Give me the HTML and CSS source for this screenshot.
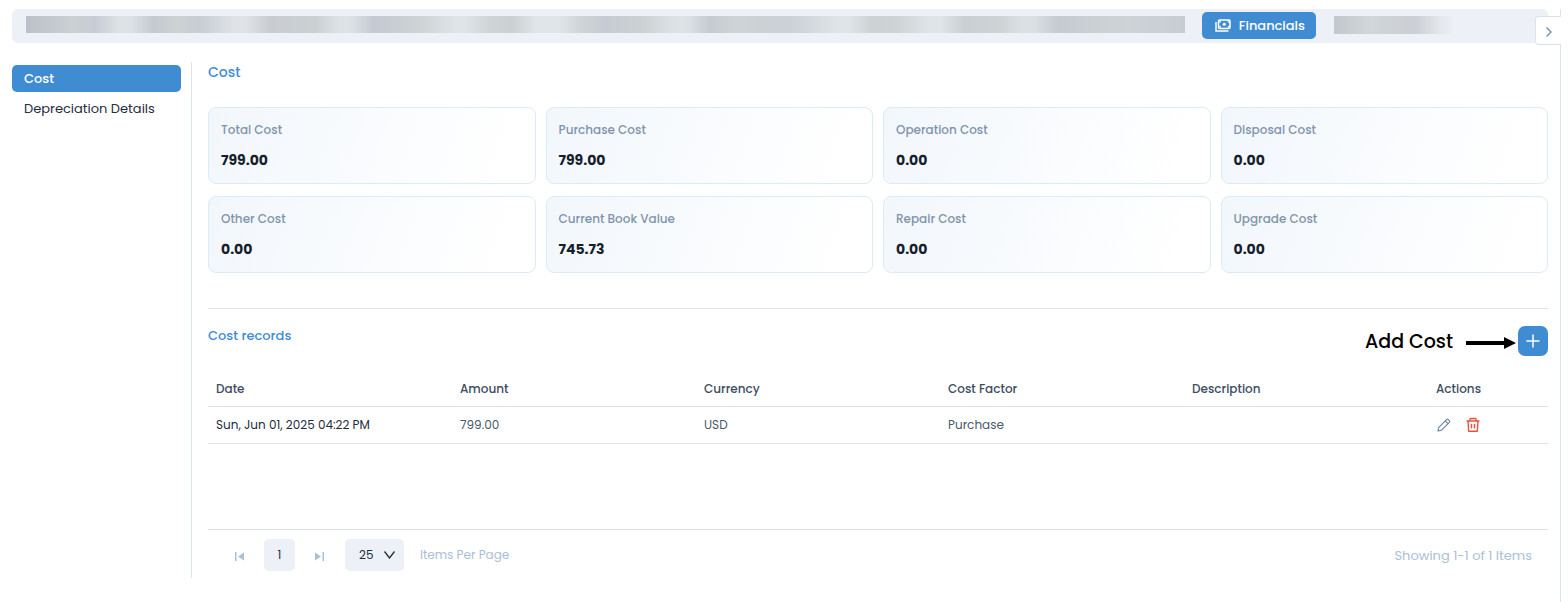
FILE: index.html
```
<!DOCTYPE html>
<html lang="en">
<head>
  <meta charset="UTF-8">
  <meta name="viewport" content="width=device-width, initial-scale=1.0">
  <title>Financials</title>
  <link rel="stylesheet" href="styles.css">
</head>
<body>
<div class="panel">
  <header class="topbar">
    <div class="masked masked-tabs"></div>
    <button class="tab-button" type="button">
      <svg width="16" height="13" viewBox="0 0 16 13" fill="none" stroke="currentColor" stroke-width="1.5">
        <path d="M1 3v9h12.500"/>
        <rect x="3.500" y="1" width="11.500" height="8.500" rx="1"/>
        <circle cx="9.250" cy="5.250" r="1.600" fill="currentColor" stroke="none"/>
        <path d="M3.500 3.200h1.800V1M15 3.200h-1.800V1M3.500 7.300h1.800v2.200M15 7.300h-1.800v2.200" stroke-width="1"/>
      </svg>
      Financials
    </button>
    <div class="masked masked-tab"></div>
  </header>
  <button class="panel-toggle" type="button" aria-label="Expand panel">
    <svg width="8" height="12" viewBox="0 0 8 12" fill="none" stroke="currentColor" stroke-width="1.500">
      <path d="M1.500 1.500L6 6l-4.500 4.500"/>
    </svg>
  </button>

  <div class="layout">
    <nav class="sidebar">
      <a class="side-link active" href="#cost">Cost</a>
      <a class="side-link" href="#depreciation">Depreciation Details</a>
    </nav>

    <main class="content">
      <h2 class="title">Cost</h2>
      <div class="cards">
        <div class="card"><div class="label">Total Cost</div><div class="value">799.00</div></div>
        <div class="card"><div class="label">Purchase Cost</div><div class="value">799.00</div></div>
        <div class="card"><div class="label">Operation Cost</div><div class="value">0.00</div></div>
        <div class="card"><div class="label">Disposal Cost</div><div class="value">0.00</div></div>
        <div class="card"><div class="label">Other Cost</div><div class="value">0.00</div></div>
        <div class="card"><div class="label">Current Book Value</div><div class="value">745.73</div></div>
        <div class="card"><div class="label">Repair Cost</div><div class="value">0.00</div></div>
        <div class="card"><div class="label">Upgrade Cost</div><div class="value">0.00</div></div>
      </div>

      <section class="records">
        <div class="records-head">
          <h3 class="records-title">Cost records</h3>
          <div class="add-cost">
            <span class="add-label" id="add-label">Add Cost</span>
            <svg class="arrow" width="50" height="12" viewBox="0 0 50 12">
              <path d="M0 4h38V0l12 6-12 6V8H0z" fill="#000"/>
            </svg>
            <button class="add-button" type="button" aria-labelledby="add-label">
              <svg width="14" height="14" viewBox="0 0 14 14" fill="none" stroke="currentColor" stroke-width="1.500" stroke-linecap="round">
                <path d="M7 1v12M1 7h12"/>
              </svg>
            </button>
          </div>
        </div>

        <table class="table">
          <thead>
            <tr>
              <th>Date</th>
              <th>Amount</th>
              <th>Currency</th>
              <th>Cost Factor</th>
              <th>Description</th>
              <th class="col-actions">Actions</th>
            </tr>
          </thead>
          <tbody>
            <tr>
              <td class="date">Sun, Jun 01, 2025 04:22 PM</td>
              <td>799.00</td>
              <td>USD</td>
              <td>Purchase</td>
              <td></td>
              <td>
                <div class="actions">
                  <button class="icon-button" type="button" aria-label="Edit">
                    <svg width="16" height="16" viewBox="0 0 16 16" fill="none" stroke="currentColor" stroke-width="1.200" stroke-linejoin="round">
                      <path d="M2 14l.800-3.600 7.800-7.800a1.300 1.300 0 0 1 1.800 0l1 1a1.300 1.300 0 0 1 0 1.800l-7.800 7.800L2 14z"/>
                      <path d="M9.300 4l2.700 2.700"/>
                    </svg>
                  </button>
                  <button class="icon-button danger" type="button" aria-label="Delete">
                    <svg width="16" height="16" viewBox="0 0 16 16" fill="none" stroke="currentColor" stroke-width="1.400" stroke-linejoin="round">
                      <path d="M1.500 4h13M4.500 4l.800-2.500h5.400l.800 2.500M3 4l.700 10.300h8.600L13 4M6.500 7v4.500M9.500 7v4.500"/>
                    </svg>
                  </button>
                </div>
              </td>
            </tr>
          </tbody>
        </table>
      </section>

      <footer class="pager">
        <button class="icon-button page-nav" type="button" aria-label="First page">
          <svg width="9" height="9" viewBox="0 0 9 9" fill="currentColor"><path d="M0 0h1.500v9H0zM9 .500v8L3 4.500z"/></svg>
        </button>
        <button class="page-number" type="button">1</button>
        <button class="icon-button page-nav" type="button" aria-label="Last page">
          <svg width="9" height="9" viewBox="0 0 9 9" fill="currentColor"><path d="M7.500 0H9v9H7.500zM0 .500v8l6-4z"/></svg>
        </button>
        <div class="page-size">
          <select id="page-size">
            <option>25</option>
            <option>50</option>
            <option>100</option>
          </select>
          <svg class="chevron" width="11" height="8" viewBox="0 0 11 8" fill="none" stroke="currentColor" stroke-width="1.300">
            <path d="M.500 .500l5 6.500 5-6.500"/>
          </svg>
        </div>
        <label class="page-size-label" for="page-size">Items Per Page</label>
        <span class="showing">Showing 1-1 of 1 Items</span>
      </footer>
    </main>
  </div>
</div>
</body>
</html>
```
FILE: styles.css
```
* {
  box-sizing: border-box;
}
body {
  margin: 0;
  padding-top: 9px;
  background: #fff;
  color: #1f2d3d;
  font-family: Poppins, Inter, "Open Sans", sans-serif;
  font-size: 13px;
  line-height: 20px;
}
button, select {
  font: inherit;
  border: none;
  cursor: pointer;
}
svg {
  display: block;
  flex: none;
}
h2, h3 {
  margin: 0;
  font-weight: 500;
  color: #3f8cd2;
}

.panel {
  position: relative;
  display: flex;
  flex-direction: column;
  min-height: calc(100vh - 9px);
  margin-right: 7px;
  padding: 0 12px 24px;
  border-right: 1px solid #dbe3ec;
}

.topbar {
  display: flex;
  align-items: center;
  padding: 3px 96px 4px 14px;
  border-radius: 6px;
  background: #edf0f6;
}
.masked {
  margin-bottom: 2px;
}
.masked-tabs {
  flex: 1;
  height: 17px;
  margin-right: 17px;
  background: linear-gradient(90deg, #bcc0c9 0%, #cbd0d3 4%, #c8ccd4 6%, #dde2e6 8%, #dde2e6 9%, #c5cad1 11%, #cdd2d5 13%, #c8ccd4 15%, #dfe3e7 18%, #dfe3e7 19%, #c9cdd2 21%, #cbd0d3 25%, #dde2e6 27%, #dde2e6 28%, #c5c9d2 30%, #ced3d6 34%, #dfe4e8 37%, #dfe4e8 38%, #cfd4d7 40%, #cbd0d3 42%, #e0e5e9 44%, #e0e5e9 46%, #ced3d6 48%, #c7ccd4 50%, #cbd0d3 53%, #dde2e6 56%, #dde2e6 57%, #c6cbd3 59%, #ced3d6 61%, #ccd0d7 66%, #dfe4e8 70%, #dfe4e8 71%, #cdd2d5 73%, #ced3d6 75%, #dfe4e8 78%, #dfe4e8 79%, #cacfd4 81%, #ced3d6 84%, #dbe0e4 86%, #dbe0e4 87%, #c6cad3 89%, #cbd0d3 92%, #ced3d8 95%, #c8ccd4 100%);
}
.masked-tab {
  width: 118px;
  height: 18px;
  margin-left: 18px;
  background: linear-gradient(90deg, #c2c7cd, #d1d6d9 30%, #cbcfd5 68%, #e4e7eb 90%, #ebeef3);
}
.tab-button {
  display: flex;
  align-items: center;
  gap: 8px;
  height: 27px;
  padding: 0 11px 0 13px;
  border-radius: 5px;
  background: #3f8cd2;
  color: #fff;
  font-weight: 500;
}
/* sits over the right end of the top bar */
.panel-toggle {
  position: absolute;
  top: 7px;
  right: -1px;
  display: flex;
  align-items: center;
  justify-content: center;
  width: 26px;
  height: 29px;
  padding: 2px 0 0;
  border: 1px solid #dbe3ec;
  border-right: none;
  border-radius: 4px 0 0 4px;
  background: #fff;
  color: #8296ac;
}

.layout {
  display: flex;
  flex: 1;
  margin-top: 19px;
}
.sidebar {
  display: flex;
  flex-direction: column;
  gap: 3px;
  width: 180px;
  padding: 3px 10px 0 0;
  border-right: 1px solid #dbe3ec;
}
.side-link {
  padding: 4px 12px 3px;
  border-radius: 5px;
  color: #1f2d3d;
  text-decoration: none;
}
.side-link.active {
  background: #3f8cd2;
  color: #fff;
  font-weight: 500;
}

.content {
  display: flex;
  flex: 1;
  flex-direction: column;
  min-width: 0;
  padding-left: 16px;
}
.title {
  font-size: 14px;
  line-height: 20px;
}
.cards {
  display: grid;
  grid-template-columns: repeat(4, 1fr);
  gap: 12px 10px;
  margin-top: 25px;
}
.card {
  padding: 12px;
  border: 1px solid #dcebf8;
  border-radius: 8px;
  background: linear-gradient(110deg, #f2f7fc, #fff 90%);
}
.label {
  color: #8194ab;
  font-size: 12px;
  font-weight: 500;
}
.value {
  margin-top: 9px;
  line-height: 22px;
  font-size: 14px;
  font-weight: 700;
  color: #14202c;
}

.records {
  flex: 1;
  margin-top: 35px;
  border-top: 1px solid #dde3ee;
}
.records-head {
  display: flex;
  justify-content: space-between;
  padding-top: 17px;
}
.records-title {
  font-size: 13px;
  line-height: 20px;
}
.add-cost {
  display: flex;
  align-items: center;
  color: #000;
}
.add-label {
  padding-top: 2px;
  font-size: 19px;
  font-weight: 500;
}
.arrow {
  margin: 3px 2px 0 13px;
}
.add-button {
  display: flex;
  align-items: center;
  justify-content: center;
  width: 30px;
  height: 30px;
  padding: 0;
  border-radius: 7px;
  background: #3f8cd2;
  color: #fff;
}

.table {
  width: 100%;
  margin-top: 13px;
  border-collapse: collapse;
  table-layout: fixed;
  font-size: 12px;
}
.table th,
.table td {
  height: 37px;
  padding: 0 8px;
  border-bottom: 1px solid #dde3ee;
  text-align: left;
  color: #4a5a6c;
}
.table th {
  padding-top: 4px;
  font-weight: 500;
  color: #3d4d5f;
}
.table .date {
  color: #1f2d3d;
}
.table .col-actions {
  width: 120px;
}
.actions {
  display: flex;
  gap: 13px;
}
.icon-button {
  padding: 0;
  background: none;
  color: #7287a0;
}
.icon-button.danger {
  color: #ee5140;
}

.pager {
  display: flex;
  align-items: center;
  padding: 9px 16px 7px 27px;
  border-top: 1px solid #dde3ee;
  color: #abc0d6;
}
.page-nav {
  padding-top: 2px;
  color: #abc0d6;
}
.page-number {
  width: 31px;
  height: 32px;
  margin: 0 20px;
  padding: 0;
  border-radius: 5px;
  background: #edf0f6;
  color: #1f2d3d;
  font-size: 12px;
}
.page-size {
  position: relative;
  margin: 0 16px 0 21px;
}
.page-size select {
  width: 59px;
  height: 32px;
  padding: 0 14px;
  border-radius: 5px;
  background: #edf0f6;
  color: #1f2d3d;
  font-size: 12px;
  appearance: none;
}
.page-size-label {
  font-size: 12px;
}
.chevron {
  position: absolute;
  top: 12px;
  right: 9px;
  color: #1f2d3d;
  pointer-events: none;
}
.showing {
  margin-left: auto;
  padding-top: 2px;
}
```
